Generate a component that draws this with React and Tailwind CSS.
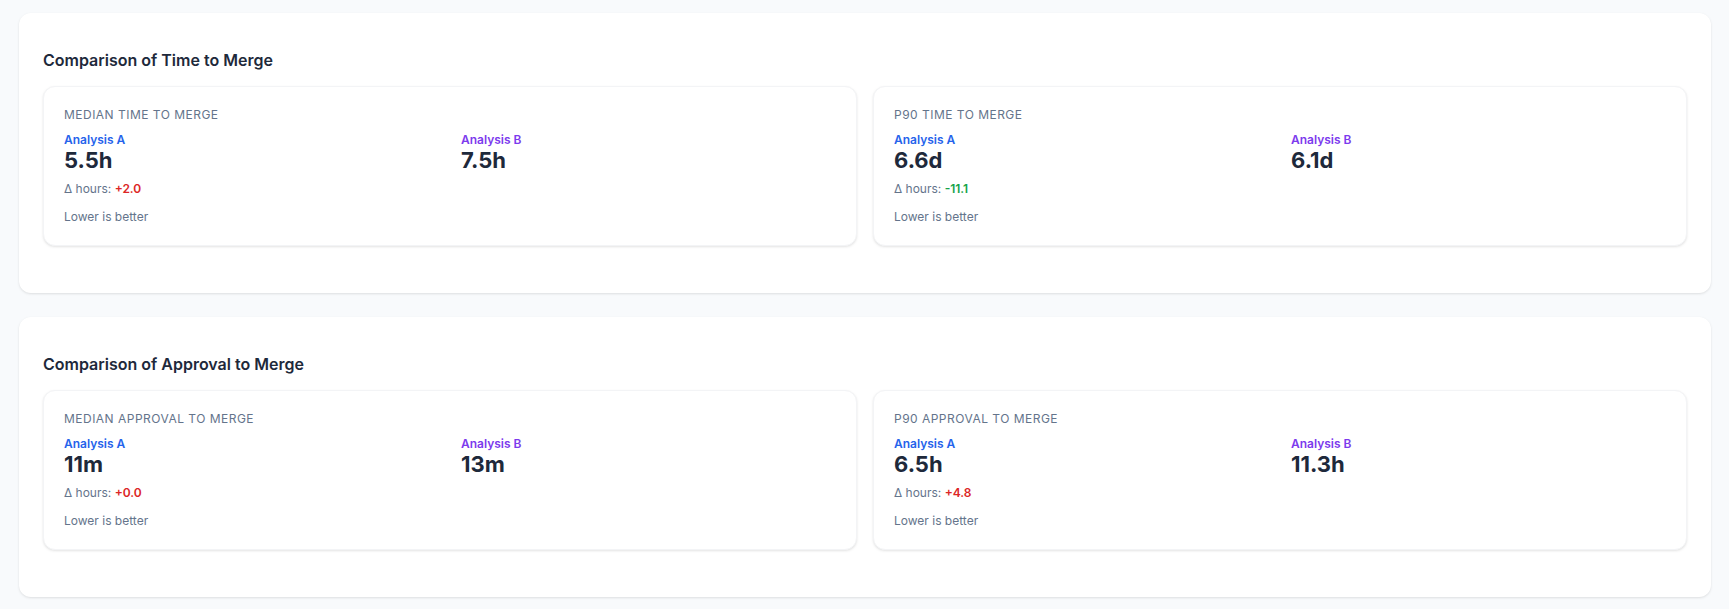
import React from "react";

const sections = [
  {
    title: "Comparison of Time to Merge",
    cards: [
      { label: "Median Time to Merge", a: "5.5h", b: "7.5h", delta: "+2.0", good: false },
      { label: "P90 Time to Merge", a: "6.6d", b: "6.1d", delta: "-11.1", good: true },
    ],
  },
  {
    title: "Comparison of Approval to Merge",
    cards: [
      { label: "Median Approval to Merge", a: "11m", b: "13m", delta: "+0.0", good: false },
      { label: "P90 Approval to Merge", a: "6.5h", b: "11.3h", delta: "+4.8", good: false },
    ],
  },
];

function MetricCard({ label, a, b, delta, good }) {
  return (
    <div className="rounded-xl border border-gray-100 bg-white p-5 shadow-[0_1px_3px_rgba(0,0,0,0.08),0_1px_2px_rgba(0,0,0,0.04)]">
      <div className="mb-[9px] text-xs uppercase tracking-[0.04em] text-[#64748b]">{label}</div>
      <div className="grid grid-cols-2 gap-[22px]">
        <div>
          <div className="text-xs font-semibold text-[#2563eb]">Analysis A</div>
          <div className="-mt-[1px] text-[22px] font-bold leading-[26px] text-[#1e293b]">{a}</div>
          <div className="mt-[8px] text-xs text-[#64748b]">
            Δ hours:{" "}
            <span className={good ? "font-semibold text-[#16a34a]" : "font-semibold text-[#dc2626]"}>{delta}</span>
          </div>
          <div className="mt-3 text-xs text-[#64748b]">Lower is better</div>
        </div>
        <div>
          <div className="text-xs font-semibold text-[#7c3aed]">Analysis B</div>
          <div className="-mt-[1px] text-[22px] font-bold leading-[26px] text-[#1e293b]">{b}</div>
        </div>
      </div>
    </div>
  );
}

export default function App() {
  return (
    <div
      className="min-h-screen bg-[#f8fafc] px-[18px] pl-[19px] pt-[13px] pb-[13px]"
      style={{ fontFamily: "Inter, 'Noto Sans', sans-serif" }}
    >
      <div className="flex flex-col gap-6">
        {sections.map((s) => (
          <div
            key={s.title}
            className="rounded-xl bg-white px-6 pt-[35px] pb-[47px] shadow-[0_1px_3px_rgba(0,0,0,0.08),0_1px_2px_rgba(0,0,0,0.04)]"
          >
            <h2 className="mb-[14px] text-base font-semibold leading-6 text-[#1e293b]">{s.title}</h2>
            <div className="grid grid-cols-2 gap-4">
              {s.cards.map((c) => (
                <MetricCard key={c.label} {...c} />
              ))}
            </div>
          </div>
        ))}
      </div>
    </div>
  );
}
